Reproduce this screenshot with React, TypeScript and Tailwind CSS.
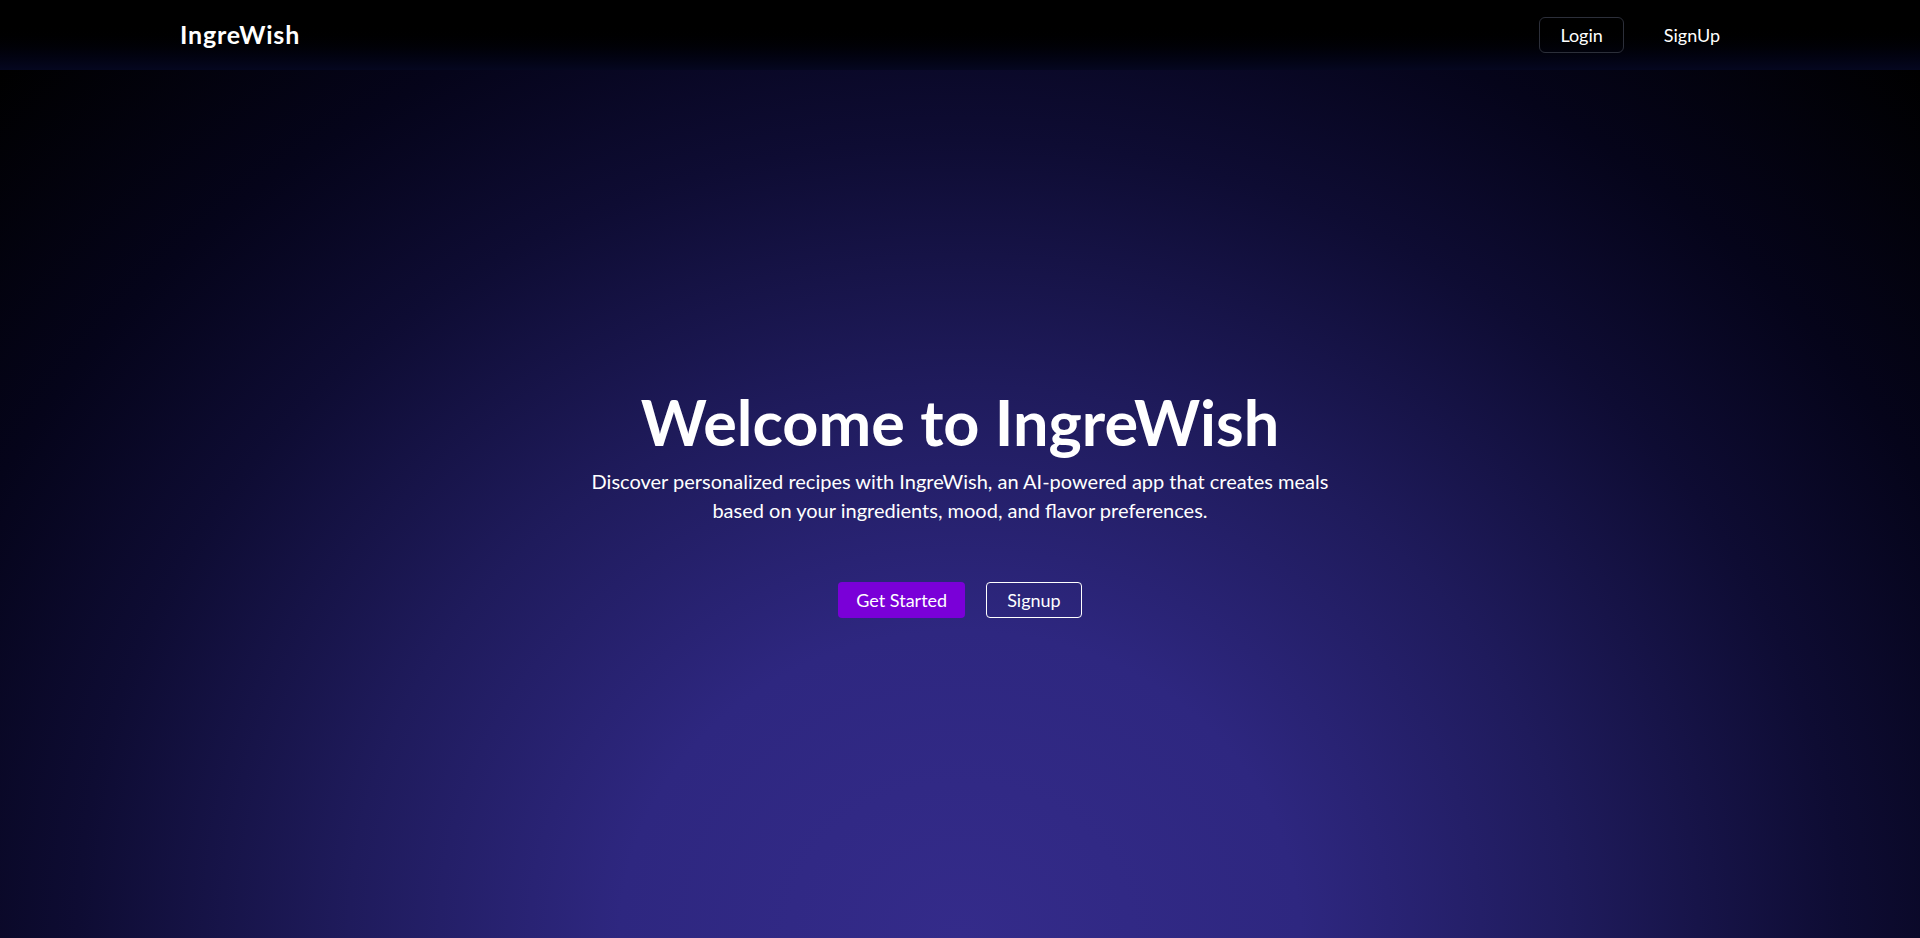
import React from "react";

export default function App() {
  return (
    <div className="min-h-screen w-full bg-black text-white font-['Lato','Noto_Sans',sans-serif]">
      <nav className="h-[70px] w-full bg-gradient-to-b from-black from-30% to-[#050720]">
        <div className="mx-auto flex h-full max-w-[1560px] items-center justify-between">
          <a className="text-[25px] font-bold tracking-[0.8px] text-white">IngreWish</a>
          <div className="flex items-center gap-5">
            <button className="rounded-md border border-[#2c2f3a] px-5 py-[3px] text-lg text-white">
              Login
            </button>
            <button className="px-5 py-[3px] text-lg text-white">SignUp</button>
          </div>
        </div>
      </nav>
      <main className="flex h-[868px] w-full flex-col items-center justify-center bg-[radial-gradient(ellipse_at_bottom,#342b8a_0%,#2e2780_25%,#1f1b5c_45%,#0e0c33_65%,#05041a_80%,#000000_100%)] text-center">
        <h1 className="text-[63px] font-bold leading-none text-white">Welcome to IngreWish</h1>
        <p className="mt-[14px] max-w-3xl text-xl leading-[29px] text-white">
          Discover personalized recipes with IngreWish, an AI-powered app that creates meals based on your ingredients, mood, and flavor preferences.
        </p>
        <div className="mt-[57px] flex items-center gap-[21px]">
          <button className="h-9 rounded bg-[#7a00d8] px-[18px] text-lg text-white">Get Started</button>
          <button className="h-9 rounded border border-white px-5 text-lg text-white">Signup</button>
        </div>
      </main>
    </div>
  );
}
